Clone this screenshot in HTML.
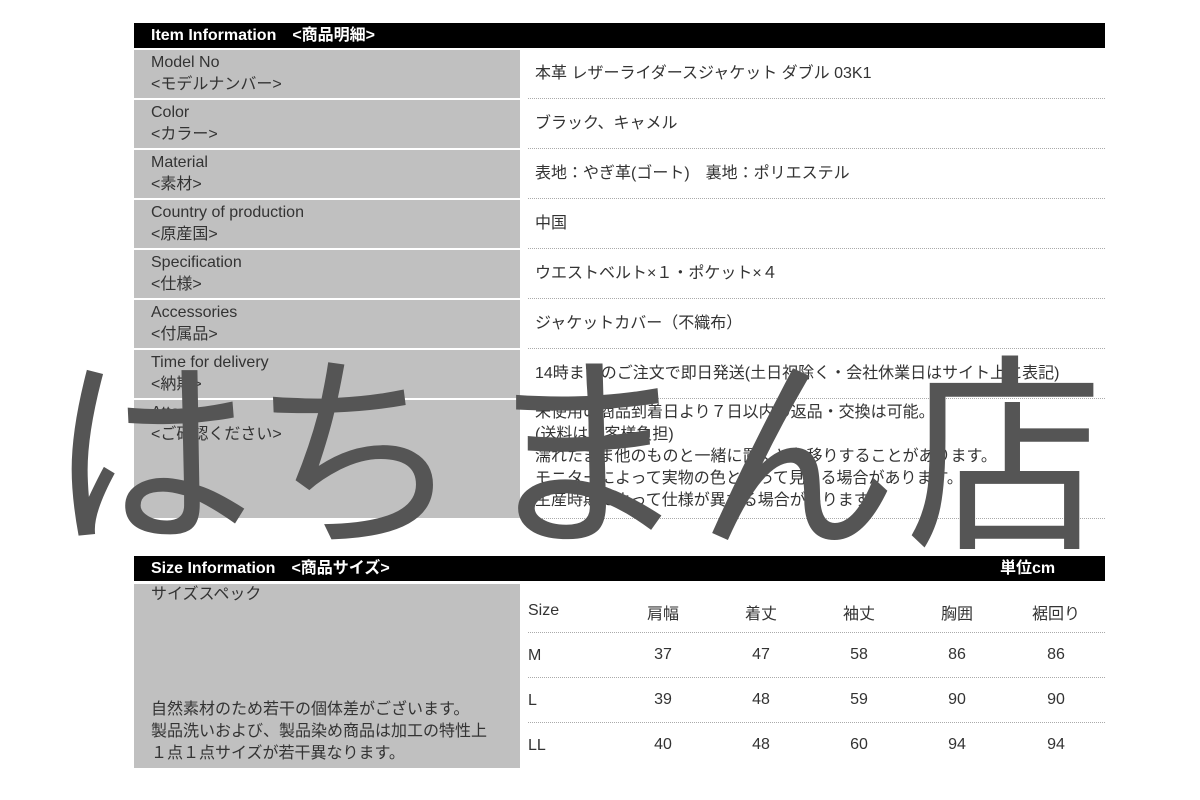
<!DOCTYPE html>
<html><head><meta charset="utf-8"><style>
body{margin:0;width:1200px;height:800px;background:#fff;position:relative;overflow:hidden;font-family:"Liberation Sans","Noto Sans CJK JP",sans-serif;color:#333;font-size:16px}
.bar{position:absolute;left:134px;width:971px;height:25px;background:#000;color:#fff;font-weight:bold;font-size:16px;line-height:25px;padding-left:17px;box-sizing:border-box}
.lab{position:absolute;left:134px;width:386px;background:#c0c0c0;padding:2px 0 0 17px;box-sizing:border-box;line-height:22px;color:#333}
.val{position:absolute;left:535px;line-height:22px}
.dl{position:absolute;left:528px;width:577px;border-top:1px dotted #aaa}
.c{position:absolute;text-align:center;width:80px}
.wm{position:absolute;top:345px;font-size:215px;line-height:1;color:#555;font-family:"IPAGothic","Noto Sans CJK JP",sans-serif}
</style></head><body>
<div class="bar" style="top:23px">Item Information　&lt;商品明細&gt;</div>
<div class="lab" style="top:50px;height:48px">Model No<br>&lt;モデルナンバー&gt;</div>
<div class="val" style="top:63px">本革 レザーライダースジャケット ダブル 03K1</div><div class="dl" style="top:98px"></div>
<div class="lab" style="top:100px;height:48px">Color<br>&lt;カラー&gt;</div>
<div class="val" style="top:113px">ブラック、キャメル</div><div class="dl" style="top:148px"></div>
<div class="lab" style="top:150px;height:48px">Material<br>&lt;素材&gt;</div>
<div class="val" style="top:163px">表地：やぎ革(ゴート)　裏地：ポリエステル</div><div class="dl" style="top:198px"></div>
<div class="lab" style="top:200px;height:48px">Country of production<br>&lt;原産国&gt;</div>
<div class="val" style="top:213px">中国</div><div class="dl" style="top:248px"></div>
<div class="lab" style="top:250px;height:48px">Specification<br>&lt;仕様&gt;</div>
<div class="val" style="top:263px">ウエストベルト×１・ポケット×４</div><div class="dl" style="top:298px"></div>
<div class="lab" style="top:300px;height:48px">Accessories<br>&lt;付属品&gt;</div>
<div class="val" style="top:313px">ジャケットカバー（不織布）</div><div class="dl" style="top:348px"></div>
<div class="lab" style="top:350px;height:48px">Time for delivery<br>&lt;納期&gt;</div>
<div class="val" style="top:363px">14時までのご注文で即日発送(土日祝除く・会社休業日はサイト上に表記)</div><div class="dl" style="top:398px"></div>
<div class="lab" style="top:400px;height:118px">Attention<br>&lt;ご確認ください&gt;</div>
<div class="val" style="top:402px">未使用の商品到着日より７日以内の返品・交換は可能。<br>(送料はお客様負担)<br>濡れたまま他のものと一緒に置くと色移りすることがあります。<br>モニターによって実物の色と違って見える場合があります。<br>生産時期によって仕様が異なる場合があります。</div><div class="dl" style="top:518px"></div>
<div class="bar" style="top:556px">Size Information　&lt;商品サイズ&gt;<span style="position:absolute;left:866px">単位cm</span></div>
<div class="lab" style="top:584px;height:184px;padding-top:0">サイズスペック<div style="position:absolute;top:115px;left:17px">自然素材のため若干の個体差がございます。<br>製品洗いおよび、製品染め商品は加工の特性上<br>１点１点サイズが若干異なります。</div></div>
<div class="dl" style="top:632px"></div><div class="dl" style="top:677px"></div><div class="dl" style="top:722px"></div>
<div class="val" style="left:528px;top:600px">Size</div><div class="c" style="left:623px;top:600px">肩幅</div><div class="c" style="left:721px;top:600px">着丈</div><div class="c" style="left:819px;top:600px">袖丈</div><div class="c" style="left:917px;top:600px">胸囲</div><div class="c" style="left:1016px;top:600px">裾回り</div>
<div class="val" style="left:528px;top:645px">M</div><div class="c" style="left:623px;top:646px">37</div><div class="c" style="left:721px;top:646px">47</div><div class="c" style="left:819px;top:646px">58</div><div class="c" style="left:917px;top:646px">86</div><div class="c" style="left:1016px;top:646px">86</div>
<div class="val" style="left:528px;top:690px">L</div><div class="c" style="left:623px;top:691px">39</div><div class="c" style="left:721px;top:691px">48</div><div class="c" style="left:819px;top:691px">59</div><div class="c" style="left:917px;top:691px">90</div><div class="c" style="left:1016px;top:691px">90</div>
<div class="val" style="left:528px;top:735px">LL</div><div class="c" style="left:623px;top:736px">40</div><div class="c" style="left:721px;top:736px">48</div><div class="c" style="left:819px;top:736px">60</div><div class="c" style="left:917px;top:736px">94</div><div class="c" style="left:1016px;top:736px">94</div>
<div class="wm" style="left:45px">は</div><div class="wm" style="left:250px">ち</div><div class="wm" style="left:480px">ま</div><div class="wm" style="left:690px">ん</div><div class="wm" style="left:900px">店</div>
</body></html>
